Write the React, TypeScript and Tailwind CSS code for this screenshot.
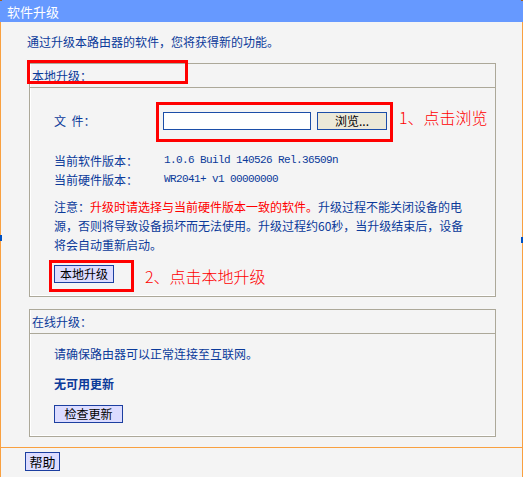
import React from "react";

const Box = ({ children, className = "" }: { children: React.ReactNode; className?: string }) => (
  <div className={"border border-[#ACA899] shadow-[inset_1px_0_0_#ffffff,inset_0_-1px_0_#ffffff] " + className}>{children}</div>
);

export default function App() {
  return (
    <div className="relative w-[523px] h-[477px] overflow-hidden bg-[#F4F4F4] text-[12px] text-[#0B3A9A] font-['Noto_Sans_CJK_SC',sans-serif]">
      <div className="h-[22px] bg-[#6699FF] text-white pl-[7px] flex items-center text-[13px] leading-none">软件升级</div>
      <div className="h-[455px] border-l border-r border-[#F9A040] flex flex-col">
        <div className="ml-[26px] mt-[11px] leading-[18px]">通过升级本路由器的软件，您将获得新的功能。</div>

        <Box className="ml-[28px] mt-[12px] w-[467px]">
          <div className="h-[24px] flex items-center pl-[2px] border-b border-[#ACA899]">本地升级：</div>
          <div className="pt-[24px] pb-[13px]">
            <div className="flex items-center h-[18px]">
              <div className="w-[133px] pl-[24px]">文&nbsp;&nbsp;件：</div>
              <div className="w-[148px] h-[18px] bg-white border border-[#1C4EA8]"></div>
              <div className="ml-[6px] w-[70px] h-[18px] bg-[#ECE9D8] border border-[#1C4EA8] flex items-center justify-center text-black leading-none">浏览...</div>
            </div>
            <div className="mt-[21px] leading-[19px]">
              <div className="flex">
                <div className="w-[134px] pl-[24px]">当前软件版本：</div>
                <div className="font-['Liberation_Mono',monospace] text-[11px] tracking-[-0.6px]">1.0.6 Build 140526 Rel.36509n</div>
              </div>
              <div className="flex">
                <div className="w-[134px] pl-[24px]">当前硬件版本：</div>
                <div className="font-['Liberation_Mono',monospace] text-[11px] tracking-[-0.6px]">WR2041+ v1 00000000</div>
              </div>
            </div>
            <p className="mt-[8px] ml-[24px] w-[412px] leading-[19px]">
              注意：<span className="text-[#FF0000]">升级时请选择与当前硬件版本一致的软件。</span>升级过程不能关闭设备的电源，否则将导致设备损坏而无法使用。升级过程约60秒，当升级结束后，设备将会自动重新启动。
            </p>
            <div className="mt-[11px] ml-[24px] w-[60px] h-[18px] bg-[#DCDCFF] border border-[#1C3FA0] flex items-center justify-center text-black leading-none">本地升级</div>
          </div>
        </Box>

        <Box className="ml-[28px] mt-[12px] w-[467px]">
          <div className="h-[24px] flex items-center pl-[2px] border-b border-[#ACA899]">在线升级：</div>
          <div className="pt-[11px] pb-[13px] pl-[24px] leading-[18px]">
            <div>请确保路由器可以正常连接至互联网。</div>
            <div className="mt-[12px] font-bold">无可用更新</div>
            <div className="mt-[12px] w-[69px] h-[18px] bg-[#DCDCFF] border border-[#1C3FA0] flex items-center justify-center text-black leading-none">检查更新</div>
          </div>
        </Box>

        <div className="mt-[10px] border-t border-[#F9A040] pt-[4px] pl-[24px]">
          <div className="w-[35px] h-[19px] bg-[#DCDCFF] border border-[#1C3FA0] flex items-center justify-center text-black text-[13px] leading-none">帮助</div>
        </div>
      </div>

      {/* annotations */}
      <div className="absolute left-[27px] top-[60px] w-[161px] h-[24px] border-[3px] border-[#FF0000]"></div>
      <div className="absolute left-[156px] top-[102px] w-[237px] h-[40px] border-[3px] border-[#FF0000]"></div>
      <div className="absolute left-[399px] top-[107px] text-[16px] leading-[20px] font-light text-[#FF0000]">1、点击浏览</div>
      <div className="absolute left-[49px] top-[260px] w-[85px] h-[32px] border-[3px] border-[#FF0000]"></div>
      <div className="absolute left-[145px] top-[266px] text-[16px] leading-[20px] font-light text-[#FF0000]">2、点击本地升级</div>

      {/* window handles */}
      <div className="absolute left-0 top-[235px] w-[2px] h-[6px] bg-[#0050C0]"></div>
      <div className="absolute right-0 top-[237px] w-[2px] h-[6px] bg-[#0050C0]"></div>
      <div className="absolute left-0 top-0 w-[2px] h-[1px] bg-[#A06020]"></div>
      <div className="absolute right-0 top-0 w-[2px] h-[1px] bg-[#A06020]"></div>
    </div>
  );
}
